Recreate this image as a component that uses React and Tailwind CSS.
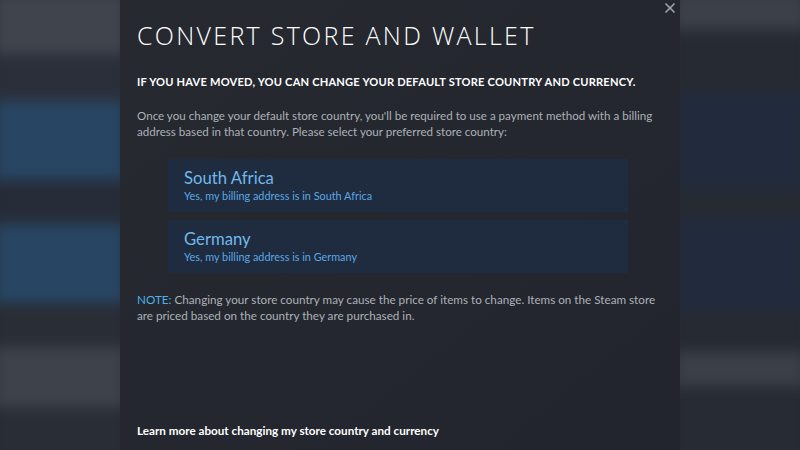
import { X } from "lucide-react";

const countries = [
  { name: "South Africa", note: "Yes, my billing address is in South Africa" },
  { name: "Germany", note: "Yes, my billing address is in Germany" },
];

function BlurredSide({ bands }) {
  return (
    <div className="relative w-[120px] h-full overflow-hidden bg-[#282c35]">
      <div className="flex flex-col h-full blur-[6px] scale-110">
        {bands.map((b, i) => (
          <div key={i} className={b} />
        ))}
      </div>
    </div>
  );
}

const leftBands = [
  "h-[14px] bg-[#2a2e37]",
  "h-[56px] bg-[#40444d]",
  "h-[42px] bg-[#2a2f3a]",
  "h-[72px] bg-[#284563]",
  "h-[40px] bg-[#262c38]",
  "h-[72px] bg-[#284563]",
  "h-[40px] bg-[#292d36]",
  "h-[55px] bg-[#3e424a]",
  "h-[59px] bg-[#292d36]",
];

const rightBands = [
  "h-[12px] bg-[#2a2e37]",
  "h-[36px] bg-[#3c4049]",
  "h-[56px] bg-[#262a32]",
  "h-[88px] bg-[#222b3d]",
  "h-[26px] bg-[#262b33]",
  "h-[86px] bg-[#222b3d]",
  "h-[36px] bg-[#262a32]",
  "h-[32px] bg-[#3b3f47]",
  "h-[78px] bg-[#272b33]",
];

export default function App() {
  return (
    <div className="flex w-[800px] h-[450px] overflow-hidden bg-[#262a32] font-['Lato',sans-serif]">
      <BlurredSide bands={leftBands} />

      {/* Dialog */}
      <div className="relative w-[560px] h-full flex flex-col bg-gradient-to-br from-[#262930] to-[#22252d] px-[17px] pt-[18px] pb-[12px]">
        <button className="absolute right-[2px] top-[0px] text-[#a0a6ae]">
          <X className="w-[16px] h-[16px]" strokeWidth={2.5} />
        </button>

        <h1 className="font-['Open_Sans',sans-serif] text-[25px] leading-[34px] font-light tracking-[2.3px] text-white">
          CONVERT STORE AND WALLET
        </h1>

        <p className="mt-[21px] text-[11.1px] leading-[18px] font-bold text-white tracking-[0.2px] whitespace-nowrap">
          IF YOU HAVE MOVED, YOU CAN CHANGE YOUR DEFAULT STORE COUNTRY AND CURRENCY.
        </p>

        <p className="mt-[17px] text-[11.6px] leading-[16px] text-[#acb2b8] whitespace-nowrap">
          Once you change your default store country, you'll be required to use a payment method with a billing
          <br />
          address based in that country. Please select your preferred store country:
        </p>

        <div className="mt-[19px] ml-[31px] w-[460px] flex flex-col gap-[8px]">
          {countries.map((c) => (
            <div key={c.name} className="h-[53px] bg-[#1f2b3e] px-[16px] pt-[8px]">
              <div className="text-[16.7px] leading-[22px] text-[#6fb8ec]">{c.name}</div>
              <div className="text-[10.85px] leading-[14px] text-[#5aa9e6]">{c.note}</div>
            </div>
          ))}
        </div>

        <p className="mt-[18px] text-[11.7px] leading-[16px] text-[#acb2b8] whitespace-nowrap">
          <span className="text-[#4fb0e8]">NOTE:</span> Changing your store country may cause the price of items to
          change. Items on the Steam store
          <br />
          are priced based on the country they are purchased in.
        </p>

        <div className="mt-auto text-[11.7px] leading-[16px] font-bold text-white">
          Learn more about changing my store country and currency
        </div>
      </div>

      <BlurredSide bands={rightBands} />
    </div>
  );
}
